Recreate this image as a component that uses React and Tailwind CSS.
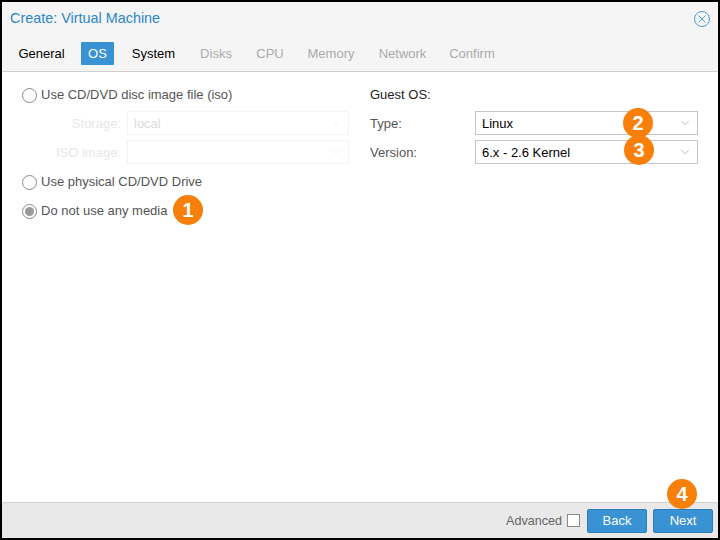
import { ChevronDown } from 'lucide-react';

const tabs = [
  { name: 'General', w: 'w-[63px] mr-[8px]', cls: 'text-black' },
  { name: 'OS', w: 'w-[33px]', cls: 'text-white bg-[#3892d4] rounded-[1px]' },
  { name: 'System', w: 'w-[79px]', cls: 'text-black' },
  { name: 'Disks', w: 'w-[46px]', cls: 'text-[#ababab]' },
  { name: 'CPU', w: 'w-[62px]', cls: 'text-[#ababab]' },
  { name: 'Memory', w: 'w-[60px]', cls: 'text-[#ababab]' },
  { name: 'Network', w: 'w-[83px]', cls: 'text-[#ababab]' },
  { name: 'Confirm', w: 'w-[56px]', cls: 'text-[#ababab]' },
];

function Radio({ checked, label }) {
  return (
    <div className="flex items-center h-[22px] gap-[4px] pl-[1px]">
      <span className="w-[15px] h-[15px] rounded-full border border-[#8a8a8a] bg-white flex items-center justify-center">
        {checked && <span className="w-[9px] h-[9px] rounded-full bg-[#9a9a9a]"></span>}
      </span>
      <span className="text-[#555]">{label}</span>
    </div>
  );
}

function Field({ label, value, labelCls, boxCls, textCls, chevCls, labelWidth }) {
  return (
    <div className="flex items-center h-[24px]">
      <span className={`${labelWidth} ${labelCls} pt-[1px]`}>{label}</span>
      <div className={`flex-1 h-[24px] border flex items-center justify-between pl-[6px] pr-[5px] bg-white ${boxCls}`}>
        <span className={`${textCls} pt-[1px]`}>{value}</span>
        <ChevronDown size={14} strokeWidth={1.1} className={chevCls} />
      </div>
    </div>
  );
}

function Badge({ n, className }) {
  return (
    <div className={`absolute w-[30px] h-[30px] rounded-full bg-[#f77f0a] text-white font-bold text-[20px] pb-[1px] flex items-center justify-center ${className}`}>
      {n}
    </div>
  );
}

export default function App() {
  return (
    <div className="relative w-[720px] h-[540px] bg-white border-2 border-black flex flex-col overflow-hidden text-[13px] font-['Liberation_Sans',sans-serif]">
      {/* Title */}
      <div className="bg-[#f5f5f5] h-[70px] border-b border-[#cfcfcf] flex flex-col">
        <div className="flex items-center justify-between h-[33px] pl-[8px] pr-[7px]">
          <span className="text-[14.4px] text-[#2b87ca] pt-[1px]">Create: Virtual Machine</span>
          <svg width="18" height="18" viewBox="0 0 18 18" fill="none" stroke="#4f9fd8" strokeWidth="1">
            <circle cx="9" cy="9" r="7.5" />
            <path d="M5.5 5.5l7 7M12.5 5.5l-7 7" />
          </svg>
        </div>
        <div className="flex pl-[8px] h-[23px] mt-[7px]">
          {tabs.map((t) => (
            <div key={t.name} className={`${t.w} ${t.cls} h-[23px] flex items-center justify-center`}>
              {t.name}
            </div>
          ))}
        </div>
      </div>

      {/* Body */}
      <div className="flex-1 flex px-[19px] pt-[12px]">
        <div className="w-[328px]">
          <Radio label="Use CD/DVD disc image file (iso)" />
          <div className="flex flex-col gap-[5px] mt-[5px] mb-[7px]">
            <Field label="Storage:" value="local" labelWidth="w-[106px] text-right pr-[6px]" labelCls="text-[#e8e8e8]" boxCls="border-[#f4f4f4]" textCls="text-[#dcdcdc]" chevCls="text-[#e8e8e8]" />
            <Field label="ISO image:" value="" labelWidth="w-[106px] text-right pr-[6px]" labelCls="text-[#e8e8e8]" boxCls="border-[#f4f4f4]" textCls="text-[#dcdcdc]" chevCls="text-[#e8e8e8]" />
          </div>
          <Radio label="Use physical CD/DVD Drive" />
          <div className="mt-[7px]">
            <Radio checked label="Do not use any media" />
          </div>
        </div>
        <div className="w-[328px] ml-[21px]">
          <div className="h-[22px] flex items-center text-[#222]">Guest OS:</div>
          <div className="flex flex-col gap-[5px] mt-[5px]">
            <Field label="Type:" value="Linux" labelWidth="w-[105px]" labelCls="text-[#555]" boxCls="border-[#c4c4c4]" textCls="text-black" chevCls="text-[#999]" />
            <Field label="Version:" value="6.x - 2.6 Kernel" labelWidth="w-[105px]" labelCls="text-[#555]" boxCls="border-[#c4c4c4]" textCls="text-black" chevCls="text-[#999]" />
          </div>
        </div>
      </div>

      {/* Footer */}
      <div className="h-[36px] bg-[#e9e9e9] border-t border-[#cfcfcf] flex items-center justify-end pr-[5px] gap-[6px]">
        <span className="text-[#666] text-[12.6px] mr-[-1px] pt-[1px]">Advanced</span>
        <span className="w-[13px] h-[13px] border border-[#8a8a8a] bg-white"></span>
        <button className="w-[60px] h-[24px] rounded-[2px] bg-[#3892d4] border border-[#2c7fbb] text-white ml-[1px]">Back</button>
        <button className="w-[60px] h-[24px] rounded-[2px] bg-[#3892d4] border border-[#2c7fbb] text-white">Next</button>
      </div>

      <Badge n="1" className="left-[171px] top-[193px]" />
      <Badge n="2" className="left-[621px] top-[106px]" />
      <Badge n="3" className="left-[622px] top-[133px]" />
      <Badge n="4" className="left-[665px] top-[477px]" />
    </div>
  );
}
